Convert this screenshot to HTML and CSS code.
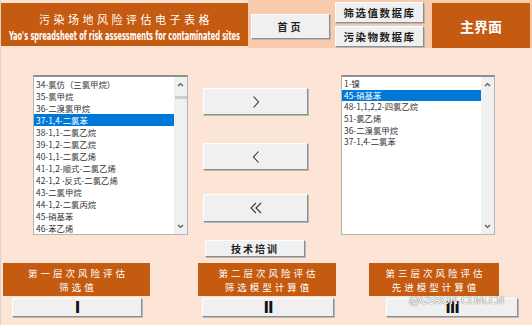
FILE: index.html
```html
<!DOCTYPE html>
<html lang="zh">
<head>
  <meta charset="UTF-8">
  <title>污染场地风险评估电子表格</title>
  <link rel="stylesheet" href="styles.css">
</head>
<body>

<div class="sheet">

  <!-- Top bar -->
  <div class="topbar">
    <div class="title">
      <div class="title-cn">污染场地风险评估电子表格</div>
      <div class="title-en">Yao's spreadsheet of risk assessments for contaminated sites</div>
    </div>
    <div class="nav">
      <button class="btn btn-home">首页</button>
      <div class="db-links">
        <button class="btn btn-db">筛选值数据库</button>
        <button class="btn btn-db">污染物数据库</button>
      </div>
      <div class="main-label">主界面</div>
    </div>
  </div>

  <!-- Pollutant picker -->
  <div class="picker">
    <div class="listbox list-left">
      <ul class="items">
        <li>34-氯仿（三氯甲烷）</li>
        <li>35-氯甲烷</li>
        <li>36-二溴氯甲烷</li>
        <li class="selected">37-1,4-二氯苯</li>
        <li>38-1,1-二氯乙烷</li>
        <li>39-1,2-二氯乙烷</li>
        <li>40-1,1-二氯乙烯</li>
        <li>41-1,2-顺式-二氯乙烯</li>
        <li>42-1,2 -反式-二氯乙烯</li>
        <li>43-二氯甲烷</li>
        <li>44-1,2-二氯丙烷</li>
        <li>45-硝基苯</li>
        <li>46-苯乙烯</li>
      </ul>
      <div class="scroll">
        <svg class="arrow" width="7" height="5" viewBox="0 0 7 5"><polyline points="1,4 3.5,1.5 6,4" fill="none" stroke="#555" stroke-width="1.2"/></svg>
        <div class="thumb"></div>
        <svg class="arrow arrow-down" width="7" height="5" viewBox="0 0 7 5"><polyline points="1,1 3.5,3.5 6,1" fill="none" stroke="#555" stroke-width="1.2"/></svg>
      </div>
    </div>

    <div class="moves">
      <button class="btn btn-move">
        <svg width="10" height="14" viewBox="0 0 10 14"><polyline points="2.5,1.5 7.5,7 2.5,12.5" fill="none" stroke="#333" stroke-width="1.1"/></svg>
      </button>
      <button class="btn btn-move">
        <svg width="10" height="14" viewBox="0 0 10 14"><polyline points="7.5,1.5 2.5,7 7.5,12.5" fill="none" stroke="#333" stroke-width="1.1"/></svg>
      </button>
      <button class="btn btn-move">
        <svg width="16" height="14" viewBox="0 0 16 14"><polyline points="8,2 3,7 8,12" fill="none" stroke="#333" stroke-width="1.1"/><polyline points="13,2 8,7 13,12" fill="none" stroke="#333" stroke-width="1.1"/></svg>
      </button>
    </div>

    <div class="listbox list-right">
      <ul class="items">
        <li>1-镍</li>
        <li class="selected">45-硝基苯</li>
        <li>48-1,1,2,2-四氯乙烷</li>
        <li>51-氯乙烯</li>
        <li>36-二溴氯甲烷</li>
        <li>37-1,4-二氯苯</li>
      </ul>
      <div class="scroll">
        <svg class="arrow" width="7" height="5" viewBox="0 0 7 5"><polyline points="1,4 3.5,1.5 6,4" fill="none" stroke="#555" stroke-width="1.2"/></svg>
        <svg class="arrow arrow-down" width="7" height="5" viewBox="0 0 7 5"><polyline points="1,1 3.5,3.5 6,1" fill="none" stroke="#555" stroke-width="1.2"/></svg>
      </div>
    </div>
  </div>

  <div class="training">
    <button class="btn btn-train">技术培训</button>
  </div>

  <!-- Tiers -->
  <div class="tiers">
    <div class="tier tier-1">第一层次风险评估<br>筛选值</div>
    <div class="tier tier-2">第二层次风险评估<br>筛选模型计算值</div>
    <div class="tier tier-3">第三层次风险评估<br>先进模型计算值</div>
  </div>
  <div class="tier-btns">
    <button class="btn btn-tier">I</button>
    <button class="btn btn-tier btn-tier-2">II</button>
    <button class="btn btn-tier btn-tier-3">III</button>
  </div>

  <div class="watermark">@GSRON.COM.CN</div>
</div>

</body>
</html>
```

FILE: styles.css
```css
  body {
    margin: 0;
    background: #ffffff;
    font-family: "Noto Sans CJK SC", "Noto Sans", sans-serif;
  }
  .sheet {
    position: relative;
    width: 531px;
    height: 325px;
    background: #fce4d6;
    border-left: 1px solid #e2d2c8;
  }
  .topbar {
    display: flex;
    height: 48px;
    background: #fbe3d4;
  }
  .title {
    width: 247px;
    height: 43px;
    margin-top: 3px;
    background: #c55a11;
    color: #ffffff;
    display: flex;
    flex-direction: column;
    align-items: center;
  }
  .title-cn {
    font-size: 11px;
    line-height: 16px;
    letter-spacing: 3.5px;
    margin-top: 8px;
    padding-left: 3px;
    white-space: nowrap;
  }
  .title-en {
    font-family: "DejaVu Sans Condensed", "Liberation Sans", sans-serif;
    font-weight: bold;
    font-size: 11.5px;
    line-height: 13px;
    margin-top: 3px;
    white-space: nowrap;
    transform: scaleX(0.64);
  }
  .nav {
    flex: 1;
    display: flex;
    align-items: flex-start;
    background: #f8cbad;
  }
  .btn {
    font-family: "Noto Sans CJK SC", "Noto Sans", sans-serif;
    background: #f0f0f0;
    border: 1px solid;
    border-color: #ffffff #8e8e8e #8e8e8e #ffffff;
    box-shadow: 1px 1px 0 #b8b8b8;
    color: #222;
    padding: 0;
    margin: 0;
    display: flex;
    align-items: center;
    justify-content: center;
    box-sizing: border-box;
  }
  .btn-home {
    width: 79px;
    height: 25px;
    margin: 14px 0 0 3px;
    font-size: 10px;
    font-weight: bold;
    letter-spacing: 3px;
  }
  .db-links {
    display: flex;
    flex-direction: column;
    gap: 3px;
    margin: 2px 0 0 5px;
  }
  .btn-db {
    width: 89px;
    height: 21px;
    font-size: 10.5px;
    font-weight: bold;
    letter-spacing: 1.5px;
  }
  .main-label {
    width: 98px;
    height: 45px;
    margin: 3px 0 0 8px;
    background: #c55a11;
    color: #ffffff;
    font-size: 14px;
    font-weight: bold;
    display: flex;
    align-items: center;
    justify-content: center;
  }
  .picker {
    display: flex;
    height: 160px;
    margin-top: 27px;
    padding-left: 32px;
  }
  .listbox {
    display: flex;
    background: #ffffff;
    border: 1px solid #b4b4b4;
    border-top: 2px solid #8f8f8f;
    box-sizing: border-box;
  }
  .list-left {
    width: 155px;
  }
  .list-right {
    width: 154px;
    margin-left: 33px;
  }
  .items {
    flex: 1;
    list-style: none;
    margin: 0;
    padding: 1px 0 0;
    overflow: hidden;
  }
  .items li {
    height: 12px;
    line-height: 12px;
    font-size: 8.4px;
    padding-left: 2px;
    color: #333;
    white-space: nowrap;
  }
  .list-right .items li {
    height: 11.7px;
    line-height: 11.7px;
  }
  .items li.selected {
    background: #0078d7;
    color: #ffffff;
  }
  .scroll {
    width: 13px;
    background: #f0f0f0;
    display: flex;
    flex-direction: column;
    align-items: center;
  }
  .arrow {
    margin-top: 5px;
  }
  .arrow-down {
    margin-top: auto;
    margin-bottom: 5px;
  }
  .thumb {
    width: 12px;
    height: 3px;
    background: #cdcdcd;
    margin-top: 9px;
  }
  .moves {
    width: 105px;
    margin-left: 15px;
    display: flex;
    flex-direction: column;
  }
  .btn-move {
    height: 27px;
    margin-top: 13px;
  }
  .btn-move + .btn-move {
    margin-top: 28px;
  }
  .btn-move:last-child {
    margin-top: 24px;
    height: 28px;
  }
  .training {
    padding-left: 204px;
    margin-top: 5px;
  }
  .btn-train {
    width: 100px;
    height: 17px;
    font-size: 10px;
    font-weight: bold;
    letter-spacing: 2px;
  }
  .tiers {
    display: flex;
    margin-top: 6px;
    padding-left: 2px;
  }
  .tier {
    height: 33px;
    background: #c55a11;
    color: #ffffff;
    font-size: 9.5px;
    line-height: 14px;
    letter-spacing: 3px;
    text-align: center;
    display: flex;
    align-items: center;
    justify-content: center;
    padding-left: 3px;
    box-sizing: border-box;
  }
  .tier-1 {
    width: 147px;
  }
  .tier-2 {
    width: 138px;
    margin-left: 48px;
  }
  .tier-3 {
    width: 130px;
    margin-left: 33px;
  }
  .tier-btns {
    display: flex;
    margin-top: 2px;
    padding-left: 11px;
  }
  .btn-tier {
    width: 130px;
    height: 19px;
    font-family: "DejaVu Sans", sans-serif;
    font-weight: bold;
    font-size: 15px;
    color: #111;
    letter-spacing: -1px;
  }
  .btn-tier-2 {
    width: 132px;
    margin-left: 60px;
  }
  .btn-tier-3 {
    width: 132px;
    margin-left: 52px;
  }
  .watermark {
    position: absolute;
    left: 408px;
    top: 294px;
    font-family: "DejaVu Sans", sans-serif;
    font-size: 10.5px;
    color: #ffffff;
    text-shadow: 0 0 1px #777, 0 0 1px #777;
  }
```
